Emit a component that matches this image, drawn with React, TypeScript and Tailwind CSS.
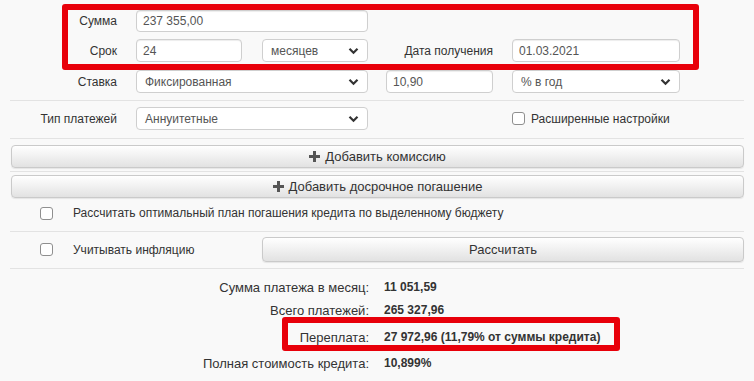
import React from "react";

const Chevron = () => (
  <svg width="11" height="8" viewBox="0 0 11 8" className="absolute right-[8px] top-1/2 -translate-y-1/2">
    <polyline points="1.5,1.8 5.5,5.8 9.5,1.8" fill="none" stroke="#333" strokeWidth="2.2" />
  </svg>
);

const Input = ({ value, className }: { value: string; className: string }) => (
  <div
    className={
      "h-[23px] bg-white border border-[#cfcfcf] rounded-[4px] shadow-[inset_0_1px_1px_rgba(0,0,0,0.075)] flex items-center pl-[6px] text-[#555] " +
      className
    }
  >
    {value}
  </div>
);

const Select = ({ value, className }: { value: string; className: string }) => (
  <div
    className={
      "relative h-[23px] bg-white border border-[#cfcfcf] rounded-[4px] flex items-center pl-[8px] text-[#555] " +
      className
    }
  >
    {value}
    <Chevron />
  </div>
);

const Checkbox = () => (
  <div className="w-[13px] h-[13px] bg-white border border-[#8f8f8f] rounded-[3px] shrink-0" />
);

const Plus = () => (
  <svg width="11" height="11" viewBox="0 0 11 11" className="mr-[5px]">
    <rect x="4" y="0" width="3" height="11" fill="#555" />
    <rect x="0" y="4" width="11" height="3" fill="#555" />
  </svg>
);

const Btn = ({ children, className }: { children: React.ReactNode; className: string }) => (
  <div
    className={
      "flex items-center justify-center bg-gradient-to-b from-white to-[#e2e2e2] border border-[#cacaca] rounded-[4px] text-[#333] text-[13px] shadow-[0_1px_1px_rgba(0,0,0,0.08)] " +
      className
    }
  >
    {children}
  </div>
);

const Divider = ({ className }: { className: string }) => (
  <div className={"h-px bg-[#e3e3e3] " + className} />
);

const Result = ({ label, value, className }: { label: string; value: string; className: string }) => (
  <div className={"flex items-center h-[20px] " + className}>
    <div className="w-[369px] text-right text-[13px]">{label}</div>
    <div className="ml-[15px] font-bold">{value}</div>
  </div>
);

export default function App() {
  return (
    <div
      className="relative w-[754px] h-[381px] overflow-hidden bg-[#f9f9f9] text-[12px] text-[#333] leading-none"
      style={{ fontFamily: '"Liberation Sans", Arial, sans-serif' }}
    >
      <div className="flex flex-col pl-[10px] pr-[10px]">
        {/* Сумма */}
        <div className="flex items-center mt-[10px] h-[22px]">
          <div className="w-[107px] text-right">Сумма</div>
          <Input value="237 355,00" className="ml-[19px] w-[232px] !h-[22px]" />
        </div>
        {/* Срок */}
        <div className="flex items-center mt-[7px] h-[23px]">
          <div className="w-[107px] text-right">Срок</div>
          <Input value="24" className="ml-[19px] w-[106px]" />
          <Select value="месяцев" className="ml-[20px] w-[106px]" />
          <div className="w-[125px] text-right">Дата получения</div>
          <Input value="01.03.2021" className="ml-[19px] w-[168px]" />
        </div>
        {/* Ставка */}
        <div className="flex items-center mt-[8px] h-[23px]">
          <div className="w-[107px] text-right">Ставка</div>
          <Select value="Фиксированная" className="ml-[19px] w-[232px]" />
          <Input value="10,90" className="ml-[18px] w-[107px]" />
          <Select value="% в год" className="ml-[19px] w-[168px]" />
        </div>
        <Divider className="mt-[7px]" />
        {/* Тип платежей */}
        <div className="flex items-center mt-[6px] h-[23px]">
          <div className="w-[107px] text-right">Тип платежей</div>
          <Select value="Аннуитетные" className="ml-[19px] w-[232px]" />
          <div className="ml-[144px] flex items-center">
            <Checkbox />
            <span className="ml-[6px]">Расширенные настройки</span>
          </div>
        </div>
        <Divider className="mt-[8px]" />
        <Btn className="mt-[6px] h-[23px] ml-[1px]">
          <Plus />
          Добавить комиссию
        </Btn>
        <Divider className="mt-[3px]" />
        <Btn className="mt-[3px] h-[23px] ml-[1px]">
          <Plus />
          Добавить досрочное погашение
        </Btn>
        <div className="flex items-center mt-[1px] h-[28px]">
          <div className="ml-[30px]">
            <Checkbox />
          </div>
          <span className="ml-[20px]">Рассчитать оптимальный план погашения кредита по выделенному бюджету</span>
        </div>
        <Divider className="mt-[4px]" />
        <div className="flex items-center mt-[5px] h-[25px]">
          <div className="flex items-center w-[252px]">
            <div className="ml-[30px]">
              <Checkbox />
            </div>
            <span className="ml-[20px]">Учитывать инфляцию</span>
          </div>
          <Btn className="flex-1 h-[25px]">Рассчитать</Btn>
        </div>
        <Divider className="mt-[6px]" />
      </div>
      {/* Results */}
      <div className="flex flex-col">
        <Result label="Сумма платежа в месяц:" value="11 051,59" className="mt-[8px]" />
        <Result label="Всего платежей:" value="265 327,96" className="mt-[3px]" />
        <Result label="Переплата:" value="27 972,96 (11,79% от суммы кредита)" className="mt-[7px]" />
        <Result label="Полная стоимость кредита:" value="10,899%" className="mt-[6px]" />
      </div>
      {/* Annotation boxes */}
      <div className="absolute left-[62px] top-[4px] w-[637px] h-[66px] border-[6px] border-[#e8000a] rounded-[3px]" />
      <div className="absolute left-[282px] top-[317px] w-[338px] h-[34px] border-[6px] border-[#e8000a] rounded-[3px]" />
    </div>
  );
}
